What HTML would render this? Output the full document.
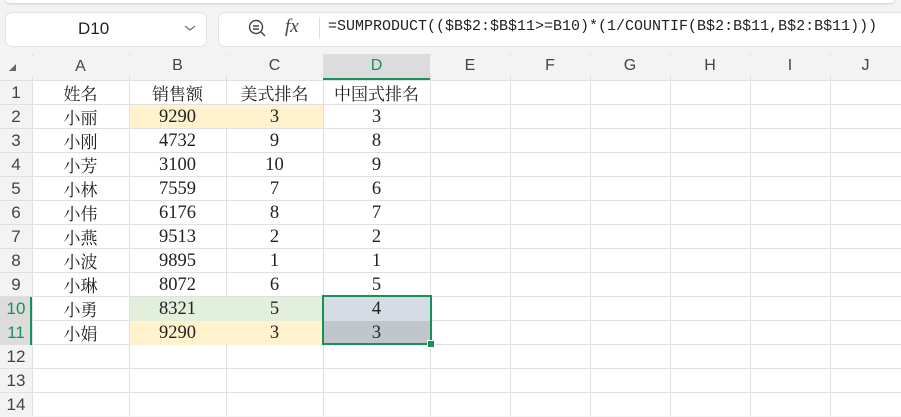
<!DOCTYPE html><html><head><style>
body{margin:0;width:901px;height:416px;overflow:hidden;background:#f3f3f3;font-family:"Liberation Serif","Noto Serif CJK SC",serif;position:relative}
.abs{position:absolute}
.hdr{font-family:"Liberation Sans",sans-serif;color:#444;font-size:16px;text-align:center;background:#f3f3f3}
.cell{position:absolute;text-align:center;font-size:18.5px;color:#222;line-height:24px;font-family:"Liberation Serif","Noto Serif CJK SC",serif}
.cj{font-size:17px;font-family:"Noto Serif CJK SC","Noto Sans CJK SC",serif}
</style></head><body>
<div class="abs" style="left:5px;top:-6px;width:890px;height:9px;background:#fff;border-radius:6px;box-shadow:0 1px 2px #ccc"></div>
<div class="abs" style="left:5px;top:12px;width:200px;height:33px;background:#fff;border:1px solid #e2e2e2;border-radius:7px"></div>
<div class="abs" style="left:78px;top:19px;font:17px 'Liberation Sans',sans-serif;color:#222">D10</div>
<svg class="abs" style="left:183px;top:23px" width="14" height="10"><path d="M2 3l5 4 5-4" stroke="#777" fill="none" stroke-width="1.3"/></svg>
<div class="abs" style="left:218px;top:12px;width:690px;height:33px;background:#fff;border:1px solid #e2e2e2;border-radius:7px"></div>
<svg class="abs" style="left:247px;top:18px" width="22" height="22"><circle cx="9" cy="9" r="6.5" stroke="#444" fill="none" stroke-width="1.4"/><path d="M6 8h6M6 11h6M14 14l4 4" stroke="#444" stroke-width="1.4"/></svg>
<div class="abs" style="left:285px;top:16px;font:italic 19px 'Liberation Serif',serif;color:#444">fx</div>
<div class="abs" style="left:319px;top:17px;width:1px;height:22px;background:#ddd"></div>
<div class="abs" style="left:328px;top:18px;font:15px 'Liberation Mono',monospace;color:#222">=SUMPRODUCT(($B$2:$B$11&gt;=B10)*(1/COUNTIF(B$2:B$11,B$2:B$11)))</div>
<div class="abs" style="left:32px;top:80px;width:869px;height:336px;background:#fff"></div>
<svg class="abs" style="left:0;top:54px" width="901" height="362">
<g stroke="#e0e0e0" stroke-width="1">
<path d="M32.5 0V362M129.5 0V362M226.5 0V362M323.5 0V362M430.5 0V362M510.5 0V362M590.5 0V362M670.5 0V362M750.5 0V362M830.5 0V362"/>
<path d="M0 26.5H901M0 50.5H901M0 74.5H901M0 98.5H901M0 122.5H901M0 146.5H901M0 170.5H901M0 194.5H901M0 218.5H901M0 242.5H901M0 266.5H901M0 290.5H901M0 314.5H901M0 338.5H901"/>
</g></svg>
<div class="abs" style="left:323px;top:54px;width:107px;height:24px;background:#dcdcdc;border-bottom:2px solid #17915a"></div>
<div class="abs" style="left:0;top:297px;width:32px;height:48px;background:#dcdcdc;border-right:2px solid #17915a;box-sizing:border-box"></div>
<svg class="abs" style="left:8px;top:63px" width="10" height="10"><path d="M8 1V8H1Z" fill="#666"/></svg>
<div class="hdr abs" style="left:32px;top:57px;width:97px;line-height:20px">A</div>
<div class="hdr abs" style="left:129px;top:57px;width:97px">B</div>
<div class="hdr abs" style="left:226px;top:57px;width:97px">C</div>
<div class="hdr abs" style="left:323px;top:57px;width:107px;color:#17915a;background:none">D</div>
<div class="hdr abs" style="left:430px;top:57px;width:80px">E</div>
<div class="hdr abs" style="left:510px;top:57px;width:80px">F</div>
<div class="hdr abs" style="left:590px;top:57px;width:80px">G</div>
<div class="hdr abs" style="left:670px;top:57px;width:80px">H</div>
<div class="hdr abs" style="left:750px;top:57px;width:80px">I</div>
<div class="hdr abs" style="left:830px;top:57px;width:71px">J</div>
<div class="abs" style="left:130px;top:105px;width:193px;height:23px;background:#fff2cc"></div>
<div class="abs" style="left:130px;top:297px;width:193px;height:24px;background:#e2efda"></div>
<div class="abs" style="left:130px;top:321px;width:193px;height:24px;background:#fff2cc"></div>
<div class="abs" style="left:324px;top:297px;width:106px;height:24px;background:#d6dce4"></div>
<div class="abs" style="left:324px;top:321px;width:106px;height:24px;background:#c0c6cc"></div>
<div class="abs" style="left:322px;top:295px;width:106px;height:46px;border:2px solid #17915a"></div>
<div class="abs" style="left:427px;top:340px;width:6px;height:6px;background:#17915a;border:1px solid #fff"></div>
<div id="g"></div>
<script>
var rows=[["姓名","销售额","美式排名","中国式排名"],["小丽","9290","3","3"],["小刚","4732","9","8"],["小芳","3100","10","9"],["小林","7559","7","6"],["小伟","6176","8","7"],["小燕","9513","2","2"],["小波","9895","1","1"],["小琳","8072","6","5"],["小勇","8321","5","4"],["小娟","9290","3","3"]];
var xs=[[32,97],[129,97],[226,97],[323,107]],h="";
for(var r=1;r<=14;r++){var y=81+24*(r-1);
h+='<div class="hdr abs" style="left:0;top:'+y+'px;width:32px;line-height:24px;background:none;font-size:17px;'+(r>=10&&r<=11?'color:#17915a':'')+'">'+r+'</div>';
if(r<=11)for(var c=0;c<4;c++){var t=rows[r-1][c];var cj=/[^\d]/.test(t);
h+='<div class="cell'+(cj?' cj':'')+'" style="left:'+xs[c][0]+'px;top:'+y+'px;width:'+xs[c][1]+'px;">'+t+'</div>';}}
document.getElementById('g').innerHTML=h;
</script>
</body></html>
